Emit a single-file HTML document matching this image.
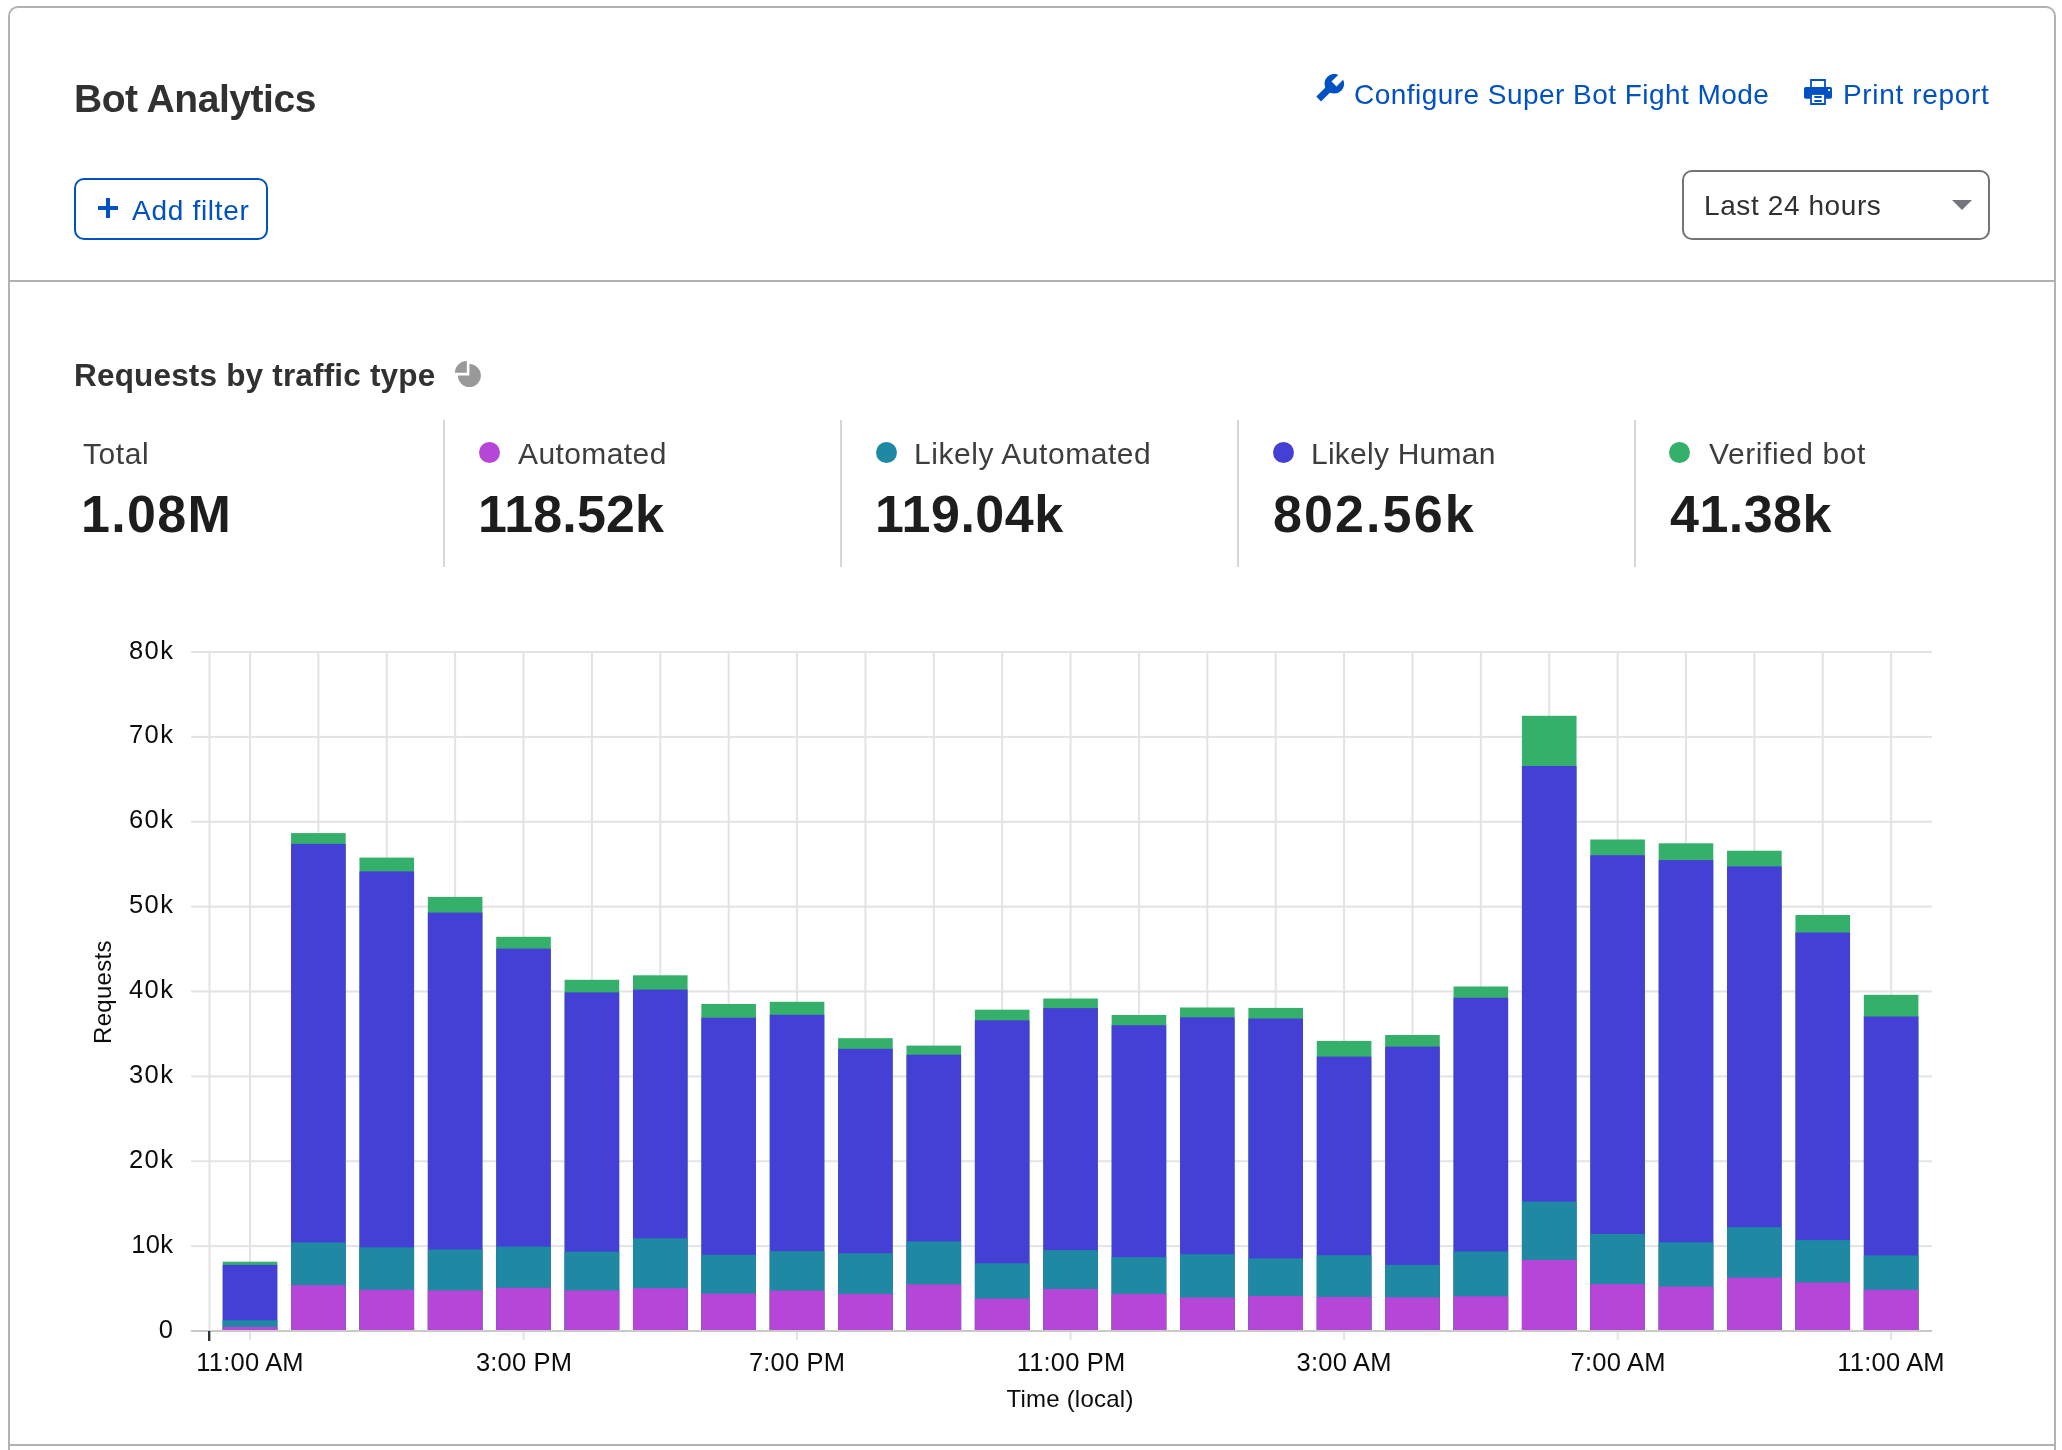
<!DOCTYPE html>
<html><head><meta charset="utf-8">
<style>
*{margin:0;padding:0;box-sizing:border-box}
html,body{width:2062px;height:1450px;overflow:hidden;background:#fff}
body{position:relative;font-family:"Liberation Sans",sans-serif}
.abs,.yl,.xl{will-change:transform}
.card{position:absolute;left:8px;top:6px;width:2048px;height:1600px;border:2px solid #b2b2b2;border-radius:10px}
.hr{position:absolute;left:10px;width:2044px;height:2px;background:#b2b2b2}
.abs{position:absolute;white-space:nowrap}
.title{left:74px;top:76px;font-size:39px;line-height:46px;font-weight:bold;color:#313131;letter-spacing:-0.45px}
.link{color:#0051c3;font-size:28px;line-height:32px}
.btn{position:absolute;left:74px;top:178px;width:194px;height:62px;border:2px solid #0051c3;border-radius:10px}
.sel{position:absolute;left:1682px;top:170px;width:308px;height:70px;border:2px solid #747474;border-radius:10px}
.h2{left:74px;top:357px;font-size:31.5px;line-height:36px;font-weight:bold;color:#313131;letter-spacing:0.18px}
.sep{position:absolute;top:420px;width:2px;height:147px;background:#d6d6d6}
.lab{font-size:30px;line-height:34px;color:#3d3d3d}
.val{font-size:52px;line-height:60px;font-weight:bold;color:#1d1d1d}
.dot{position:absolute;width:21px;height:21px;border-radius:50%}
.yl{position:absolute;left:72px;width:102.3px;text-align:right;font-size:25.5px;line-height:32px;color:#0c0c0c;letter-spacing:1.4px}
.xl{position:absolute;top:1346.8px;width:200px;text-align:center;font-size:25.5px;line-height:30px;color:#0c0c0c;letter-spacing:0.2px;text-indent:0.2px}
</style></head><body>
<div class="card"></div>
<div class="hr" style="top:280px"></div>
<div class="hr" style="top:1444px"></div>

<div class="abs title">Bot Analytics</div>

<svg class="abs" style="left:1316px;top:74px" width="28" height="28" viewBox="0 0 28 28"><g fill="#0051c3"><circle cx="18.3" cy="9.7" r="9.8"/><path d="M0.3 22.6L5 27.5L20.6 12.1L15.9 7.2z"/></g><path fill="#fff" d="M15.5 7.5L20.5 12.5L32.6 0.1L27.9 -4.6z"/></svg>
<div class="abs link" style="left:1354px;top:79px;letter-spacing:0.46px">Configure Super Bot Fight Mode</div>

<svg class="abs" style="left:1804px;top:79px" width="28" height="26" viewBox="0 0 28 26"><rect x="6.1" y="0" width="15.8" height="10" fill="#0051c3"/><rect x="7.9" y="2" width="12.2" height="8" fill="#fff"/><rect x="0" y="8" width="28" height="11.8" rx="1.7" fill="#0051c3"/><rect x="24.1" y="10.1" width="1.9" height="1.9" fill="#fff"/><rect x="6.1" y="15" width="15.8" height="11" fill="#0051c3"/><rect x="7.9" y="15.9" width="12.2" height="8.1" fill="#fff"/><rect x="10.1" y="17.1" width="7.8" height="1.8" rx="0.9" fill="#0051c3"/><rect x="10.1" y="21" width="7.8" height="1.9" rx="0.9" fill="#0051c3"/></svg>
<div class="abs link" style="left:1843px;top:79px;letter-spacing:0.66px">Print report</div>

<div class="btn"></div>
<div class="abs" style="left:98px;top:198px;width:20px;height:20px">
 <div style="position:absolute;left:8px;top:0;width:4px;height:20px;background:#0051c3"></div>
 <div style="position:absolute;left:0;top:8px;width:20px;height:4px;background:#0051c3"></div>
</div>
<div class="abs link" style="left:132px;top:195px;letter-spacing:0.7px">Add filter</div>

<div class="sel"></div>
<div class="abs" style="left:1704px;top:190px;font-size:28px;line-height:32px;color:#313131;letter-spacing:0.6px">Last 24 hours</div>
<svg class="abs" style="left:1952px;top:200px" width="20" height="10"><path d="M0 0h20L10 10z" fill="#72777d"/></svg>

<div class="abs h2">Requests by traffic type</div>
<svg class="abs" style="left:455px;top:361px" width="27" height="27" viewBox="0 0 27 27"><path fill="#999" d="M11.8 -0.1A11.9 11.9 0 0 0 -0.1 11.8H11.8z"/><path fill="#999" d="M14.4 3.1V14.6H2.9A11.5 11.5 0 1 0 14.4 3.1z"/></svg>

<div class="sep" style="left:443px"></div>
<div class="sep" style="left:840px"></div>
<div class="sep" style="left:1237px"></div>
<div class="sep" style="left:1634px"></div>

<div class="abs lab" style="left:83px;top:437px;letter-spacing:0.55px">Total</div>
<div class="abs val" style="left:81px;top:484px;letter-spacing:1.3px">1.08M</div>

<div class="dot" style="left:479px;top:442px;background:#b546d8"></div>
<div class="abs lab" style="left:518px;top:437px;letter-spacing:0.41px">Automated</div>
<div class="abs val" style="left:478.3px;top:484px;letter-spacing:0.15px">118.52k</div>

<div class="dot" style="left:876px;top:442px;background:#1f89a4"></div>
<div class="abs lab" style="left:914px;top:437px;letter-spacing:0.55px">Likely Automated</div>
<div class="abs val" style="left:875px;top:484px;letter-spacing:0.5px">119.04k</div>

<div class="dot" style="left:1273px;top:442px;background:#4540d5"></div>
<div class="abs lab" style="left:1310.5px;top:437px;letter-spacing:0.24px">Likely Human</div>
<div class="abs val" style="left:1273.3px;top:484px;letter-spacing:2.1px">802.56k</div>

<div class="dot" style="left:1669px;top:442px;background:#34b06a"></div>
<div class="abs lab" style="left:1709px;top:437px;letter-spacing:0.57px">Verified bot</div>
<div class="abs val" style="left:1670px;top:484px;letter-spacing:0.46px">41.38k</div>

<svg class="abs" style="left:0;top:0" width="2062" height="1450">
<rect x="191" y="651.00" width="1741" height="2" fill="#e3e3e3"/>
<rect x="191" y="735.88" width="1741" height="2" fill="#e3e3e3"/>
<rect x="191" y="820.75" width="1741" height="2" fill="#e3e3e3"/>
<rect x="191" y="905.62" width="1741" height="2" fill="#e3e3e3"/>
<rect x="191" y="990.50" width="1741" height="2" fill="#e3e3e3"/>
<rect x="191" y="1075.38" width="1741" height="2" fill="#e3e3e3"/>
<rect x="191" y="1160.25" width="1741" height="2" fill="#e3e3e3"/>
<rect x="191" y="1245.12" width="1741" height="2" fill="#e3e3e3"/>
<rect x="208.50" y="651" width="2" height="680" fill="#e3e3e3"/>
<rect x="249.00" y="651" width="2" height="689" fill="#e3e3e3"/>
<rect x="317.38" y="651" width="2" height="680" fill="#e3e3e3"/>
<rect x="385.76" y="651" width="2" height="680" fill="#e3e3e3"/>
<rect x="454.14" y="651" width="2" height="680" fill="#e3e3e3"/>
<rect x="522.52" y="651" width="2" height="689" fill="#e3e3e3"/>
<rect x="590.90" y="651" width="2" height="680" fill="#e3e3e3"/>
<rect x="659.28" y="651" width="2" height="680" fill="#e3e3e3"/>
<rect x="727.66" y="651" width="2" height="680" fill="#e3e3e3"/>
<rect x="796.04" y="651" width="2" height="689" fill="#e3e3e3"/>
<rect x="864.42" y="651" width="2" height="680" fill="#e3e3e3"/>
<rect x="932.80" y="651" width="2" height="680" fill="#e3e3e3"/>
<rect x="1001.18" y="651" width="2" height="680" fill="#e3e3e3"/>
<rect x="1069.56" y="651" width="2" height="689" fill="#e3e3e3"/>
<rect x="1137.94" y="651" width="2" height="680" fill="#e3e3e3"/>
<rect x="1206.32" y="651" width="2" height="680" fill="#e3e3e3"/>
<rect x="1274.70" y="651" width="2" height="680" fill="#e3e3e3"/>
<rect x="1343.08" y="651" width="2" height="689" fill="#e3e3e3"/>
<rect x="1411.46" y="651" width="2" height="680" fill="#e3e3e3"/>
<rect x="1479.84" y="651" width="2" height="680" fill="#e3e3e3"/>
<rect x="1548.22" y="651" width="2" height="680" fill="#e3e3e3"/>
<rect x="1616.60" y="651" width="2" height="689" fill="#e3e3e3"/>
<rect x="1684.98" y="651" width="2" height="680" fill="#e3e3e3"/>
<rect x="1753.36" y="651" width="2" height="680" fill="#e3e3e3"/>
<rect x="1821.74" y="651" width="2" height="680" fill="#e3e3e3"/>
<rect x="1890.12" y="651" width="2" height="689" fill="#e3e3e3"/>
<rect x="222.70" y="1261.70" width="54.6" height="68.80" fill="#34b06a"/>
<rect x="222.70" y="1264.90" width="54.6" height="65.60" fill="#4540d5"/>
<rect x="222.70" y="1320.30" width="54.6" height="10.20" fill="#1f89a4"/>
<rect x="222.70" y="1326.90" width="54.6" height="3.60" fill="#b546d8"/>
<rect x="291.08" y="833.10" width="54.6" height="497.40" fill="#34b06a"/>
<rect x="291.08" y="843.90" width="54.6" height="486.60" fill="#4540d5"/>
<rect x="291.08" y="1242.50" width="54.6" height="88.00" fill="#1f89a4"/>
<rect x="291.08" y="1285.10" width="54.6" height="45.40" fill="#b546d8"/>
<rect x="359.46" y="857.60" width="54.6" height="472.90" fill="#34b06a"/>
<rect x="359.46" y="871.40" width="54.6" height="459.10" fill="#4540d5"/>
<rect x="359.46" y="1247.40" width="54.6" height="83.10" fill="#1f89a4"/>
<rect x="359.46" y="1289.80" width="54.6" height="40.70" fill="#b546d8"/>
<rect x="427.84" y="896.90" width="54.6" height="433.60" fill="#34b06a"/>
<rect x="427.84" y="912.60" width="54.6" height="417.90" fill="#4540d5"/>
<rect x="427.84" y="1249.50" width="54.6" height="81.00" fill="#1f89a4"/>
<rect x="427.84" y="1290.40" width="54.6" height="40.10" fill="#b546d8"/>
<rect x="496.22" y="936.80" width="54.6" height="393.70" fill="#34b06a"/>
<rect x="496.22" y="948.60" width="54.6" height="381.90" fill="#4540d5"/>
<rect x="496.22" y="1246.60" width="54.6" height="83.90" fill="#1f89a4"/>
<rect x="496.22" y="1287.80" width="54.6" height="42.70" fill="#b546d8"/>
<rect x="564.60" y="979.80" width="54.6" height="350.70" fill="#34b06a"/>
<rect x="564.60" y="992.40" width="54.6" height="338.10" fill="#4540d5"/>
<rect x="564.60" y="1251.70" width="54.6" height="78.80" fill="#1f89a4"/>
<rect x="564.60" y="1290.40" width="54.6" height="40.10" fill="#b546d8"/>
<rect x="632.98" y="975.30" width="54.6" height="355.20" fill="#34b06a"/>
<rect x="632.98" y="989.60" width="54.6" height="340.90" fill="#4540d5"/>
<rect x="632.98" y="1238.30" width="54.6" height="92.20" fill="#1f89a4"/>
<rect x="632.98" y="1288.20" width="54.6" height="42.30" fill="#b546d8"/>
<rect x="701.36" y="1004.00" width="54.6" height="326.50" fill="#34b06a"/>
<rect x="701.36" y="1017.70" width="54.6" height="312.80" fill="#4540d5"/>
<rect x="701.36" y="1254.80" width="54.6" height="75.70" fill="#1f89a4"/>
<rect x="701.36" y="1293.50" width="54.6" height="37.00" fill="#b546d8"/>
<rect x="769.74" y="1001.80" width="54.6" height="328.70" fill="#34b06a"/>
<rect x="769.74" y="1014.80" width="54.6" height="315.70" fill="#4540d5"/>
<rect x="769.74" y="1251.10" width="54.6" height="79.40" fill="#1f89a4"/>
<rect x="769.74" y="1290.60" width="54.6" height="39.90" fill="#b546d8"/>
<rect x="838.12" y="1038.20" width="54.6" height="292.30" fill="#34b06a"/>
<rect x="838.12" y="1048.80" width="54.6" height="281.70" fill="#4540d5"/>
<rect x="838.12" y="1253.30" width="54.6" height="77.20" fill="#1f89a4"/>
<rect x="838.12" y="1293.90" width="54.6" height="36.60" fill="#b546d8"/>
<rect x="906.50" y="1045.60" width="54.6" height="284.90" fill="#34b06a"/>
<rect x="906.50" y="1054.70" width="54.6" height="275.80" fill="#4540d5"/>
<rect x="906.50" y="1241.50" width="54.6" height="89.00" fill="#1f89a4"/>
<rect x="906.50" y="1284.30" width="54.6" height="46.20" fill="#b546d8"/>
<rect x="974.88" y="1009.70" width="54.6" height="320.80" fill="#34b06a"/>
<rect x="974.88" y="1020.30" width="54.6" height="310.20" fill="#4540d5"/>
<rect x="974.88" y="1263.30" width="54.6" height="67.20" fill="#1f89a4"/>
<rect x="974.88" y="1298.60" width="54.6" height="31.90" fill="#b546d8"/>
<rect x="1043.26" y="998.50" width="54.6" height="332.00" fill="#34b06a"/>
<rect x="1043.26" y="1008.10" width="54.6" height="322.40" fill="#4540d5"/>
<rect x="1043.26" y="1250.10" width="54.6" height="80.40" fill="#1f89a4"/>
<rect x="1043.26" y="1289.00" width="54.6" height="41.50" fill="#b546d8"/>
<rect x="1111.64" y="1015.00" width="54.6" height="315.50" fill="#34b06a"/>
<rect x="1111.64" y="1025.20" width="54.6" height="305.30" fill="#4540d5"/>
<rect x="1111.64" y="1257.20" width="54.6" height="73.30" fill="#1f89a4"/>
<rect x="1111.64" y="1293.90" width="54.6" height="36.60" fill="#b546d8"/>
<rect x="1180.02" y="1007.50" width="54.6" height="323.00" fill="#34b06a"/>
<rect x="1180.02" y="1017.30" width="54.6" height="313.20" fill="#4540d5"/>
<rect x="1180.02" y="1254.20" width="54.6" height="76.30" fill="#1f89a4"/>
<rect x="1180.02" y="1297.50" width="54.6" height="33.00" fill="#b546d8"/>
<rect x="1248.40" y="1007.90" width="54.6" height="322.60" fill="#34b06a"/>
<rect x="1248.40" y="1018.50" width="54.6" height="312.00" fill="#4540d5"/>
<rect x="1248.40" y="1258.40" width="54.6" height="72.10" fill="#1f89a4"/>
<rect x="1248.40" y="1296.10" width="54.6" height="34.40" fill="#b546d8"/>
<rect x="1316.78" y="1040.90" width="54.6" height="289.60" fill="#34b06a"/>
<rect x="1316.78" y="1056.60" width="54.6" height="273.90" fill="#4540d5"/>
<rect x="1316.78" y="1255.20" width="54.6" height="75.30" fill="#1f89a4"/>
<rect x="1316.78" y="1296.90" width="54.6" height="33.60" fill="#b546d8"/>
<rect x="1385.16" y="1035.00" width="54.6" height="295.50" fill="#34b06a"/>
<rect x="1385.16" y="1046.60" width="54.6" height="283.90" fill="#4540d5"/>
<rect x="1385.16" y="1264.90" width="54.6" height="65.60" fill="#1f89a4"/>
<rect x="1385.16" y="1297.30" width="54.6" height="33.20" fill="#b546d8"/>
<rect x="1453.54" y="986.50" width="54.6" height="344.00" fill="#34b06a"/>
<rect x="1453.54" y="997.70" width="54.6" height="332.80" fill="#4540d5"/>
<rect x="1453.54" y="1251.50" width="54.6" height="79.00" fill="#1f89a4"/>
<rect x="1453.54" y="1296.30" width="54.6" height="34.20" fill="#b546d8"/>
<rect x="1521.92" y="715.80" width="54.6" height="614.70" fill="#34b06a"/>
<rect x="1521.92" y="766.00" width="54.6" height="564.50" fill="#4540d5"/>
<rect x="1521.92" y="1201.60" width="54.6" height="128.90" fill="#1f89a4"/>
<rect x="1521.92" y="1259.90" width="54.6" height="70.60" fill="#b546d8"/>
<rect x="1590.30" y="839.50" width="54.6" height="491.00" fill="#34b06a"/>
<rect x="1590.30" y="855.20" width="54.6" height="475.30" fill="#4540d5"/>
<rect x="1590.30" y="1234.00" width="54.6" height="96.50" fill="#1f89a4"/>
<rect x="1590.30" y="1284.10" width="54.6" height="46.40" fill="#b546d8"/>
<rect x="1658.68" y="843.30" width="54.6" height="487.20" fill="#34b06a"/>
<rect x="1658.68" y="860.10" width="54.6" height="470.40" fill="#4540d5"/>
<rect x="1658.68" y="1242.30" width="54.6" height="88.20" fill="#1f89a4"/>
<rect x="1658.68" y="1286.50" width="54.6" height="44.00" fill="#b546d8"/>
<rect x="1727.06" y="850.70" width="54.6" height="479.80" fill="#34b06a"/>
<rect x="1727.06" y="866.40" width="54.6" height="464.10" fill="#4540d5"/>
<rect x="1727.06" y="1227.30" width="54.6" height="103.20" fill="#1f89a4"/>
<rect x="1727.06" y="1277.60" width="54.6" height="52.90" fill="#b546d8"/>
<rect x="1795.44" y="915.00" width="54.6" height="415.50" fill="#34b06a"/>
<rect x="1795.44" y="932.50" width="54.6" height="398.00" fill="#4540d5"/>
<rect x="1795.44" y="1240.10" width="54.6" height="90.40" fill="#1f89a4"/>
<rect x="1795.44" y="1282.50" width="54.6" height="48.00" fill="#b546d8"/>
<rect x="1863.82" y="994.80" width="54.6" height="335.70" fill="#34b06a"/>
<rect x="1863.82" y="1016.50" width="54.6" height="314.00" fill="#4540d5"/>
<rect x="1863.82" y="1255.40" width="54.6" height="75.10" fill="#1f89a4"/>
<rect x="1863.82" y="1289.80" width="54.6" height="40.70" fill="#b546d8"/>
<rect x="191" y="1330" width="1741" height="2" fill="#c9c9c9"/>
<rect x="208" y="1331" width="2.4" height="10" fill="#333"/>
</svg>
<div class="yl" style="top:633.5px">80k</div><div class="yl" style="top:718.4px">70k</div><div class="yl" style="top:803.2px">60k</div><div class="yl" style="top:888.1px">50k</div><div class="yl" style="top:973.0px">40k</div><div class="yl" style="top:1057.9px">30k</div><div class="yl" style="top:1142.8px">20k</div><div class="yl" style="top:1227.6px;letter-spacing:0.3px;width:101.2px">10k</div><div class="yl" style="top:1312.5px">0</div>
<div class="xl" style="left:150.0px">11:00 AM</div><div class="xl" style="left:423.5px">3:00 PM</div><div class="xl" style="left:697.0px">7:00 PM</div><div class="xl" style="left:970.6px">11:00 PM</div><div class="xl" style="left:1244.1px">3:00 AM</div><div class="xl" style="left:1517.6px">7:00 AM</div><div class="xl" style="left:1791.1px">11:00 AM</div>
<div class="abs" style="left:970px;top:1384.5px;width:200px;text-align:center;font-size:24px;line-height:28px;color:#0c0c0c;letter-spacing:0.23px">Time (local)</div>
<div class="abs" style="left:53px;top:980px;width:100px;text-align:center;font-size:24px;line-height:28px;color:#0c0c0c;transform:rotate(-90deg);letter-spacing:0.3px">Requests</div>
</body></html>
